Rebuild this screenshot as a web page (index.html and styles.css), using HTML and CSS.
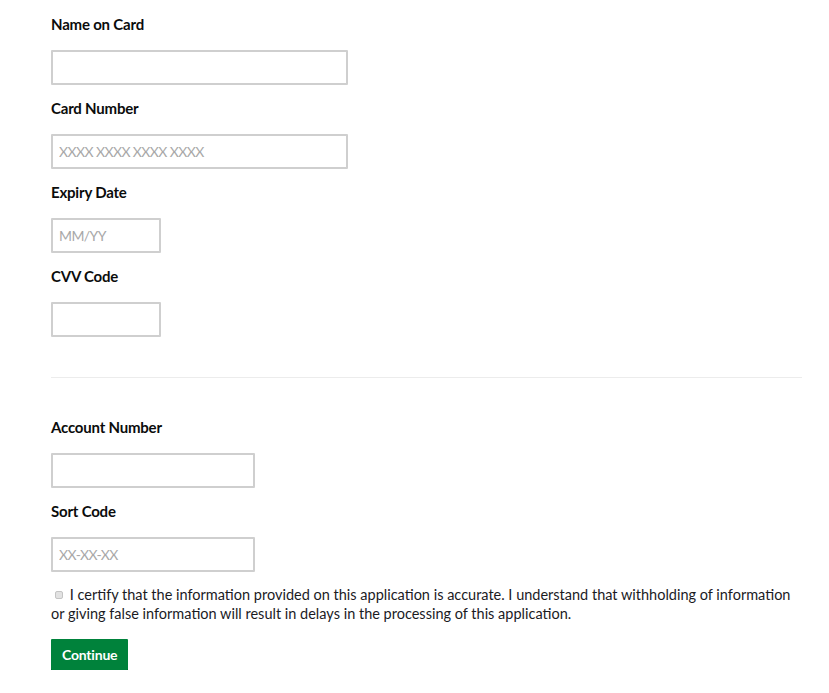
FILE: index.html
```html
<!DOCTYPE html>
<html lang="en">
<head>
<meta charset="utf-8">
<title>Payment details</title>
<link rel="stylesheet" href="styles.css">
</head>
<body>
<form class="page">
  <section class="group">
    <div class="field">
      <label class="label" for="name">Name on Card</label>
      <input class="input w-lg" id="name" type="text">
    </div>
    <div class="field">
      <label class="label" for="card">Card Number</label>
      <input class="input w-lg" id="card" type="text" placeholder="XXXX XXXX XXXX XXXX">
    </div>
    <div class="field">
      <label class="label" for="exp">Expiry Date</label>
      <input class="input w-sm" id="exp" type="text" placeholder="MM/YY">
    </div>
    <div class="field">
      <label class="label" for="cvv">CVV Code</label>
      <input class="input w-sm" id="cvv" type="text">
    </div>
  </section>
  <hr class="divider">
  <section class="group bank">
    <div class="field">
      <label class="label" for="acc">Account Number</label>
      <input class="input w-md" id="acc" type="text">
    </div>
    <div class="field">
      <label class="label" for="sort">Sort Code</label>
      <input class="input w-md" id="sort" type="text" placeholder="XX-XX-XX">
    </div>
  </section>
  <label class="certify"><input class="check" type="checkbox"> I certify that the information provided on this application is accurate. I understand that withholding of information or giving false information will result in delays in the processing of this application.</label>
  <button class="btn" type="button">Continue</button>
</form>
</body>
</html>
```

FILE: styles.css
```css
* { box-sizing: border-box; }
html, body { margin: 0; padding: 0; background: #fff; }
body { font-family: Lato, "Liberation Sans", sans-serif; color: #0b0c0c; }
.page { padding: 14px 27px 0 51px; display: flex; flex-direction: column; }
.group { display: flex; flex-direction: column; gap: 13px; }
.field { display: flex; flex-direction: column; }
.label { font-weight: 700; font-size: 15px; line-height: 20px; margin-bottom: 16px; letter-spacing: -0.2px; }
.input {
  height: 35px; border: 2px solid #cfcfcf; border-radius: 1px;
  font-family: Lato, "Liberation Sans", sans-serif; font-size: 14px; padding: 0 6px;
  background: #fff;
}
.input::placeholder { color: #a8a8a8; letter-spacing: -0.6px; }
.w-lg { width: 297px; }
.w-md { width: 204px; }
.w-sm { width: 110px; }
.divider { border: 0; border-top: 1px solid #ececec; margin: 40px 0 0 0; }
.bank { margin-top: 39px; }
.certify { margin-top: 13px; font-family: Lato, "Liberation Sans", sans-serif; font-size: 14.5px; line-height: 19px; color: #1b1b1f; }
.check {
  appearance: none; -webkit-appearance: none;
  width: 8px; height: 8px; margin: 0 3px 0 4px; vertical-align: 1px;
  background: #e2e2e2; border: 1px solid #c4c4c4; border-radius: 2px;
}
.btn {
  align-self: flex-start; margin-top: 16px;
  background: #00823b; color: #fff; border: 0; border-radius: 1px;
  box-shadow: 0 2px 0 #003618;
  font-family: Lato, "Liberation Sans", sans-serif; font-size: 14px; font-weight: 700;
  height: 31px; padding: 0 11px; letter-spacing: -0.2px;
}
```
